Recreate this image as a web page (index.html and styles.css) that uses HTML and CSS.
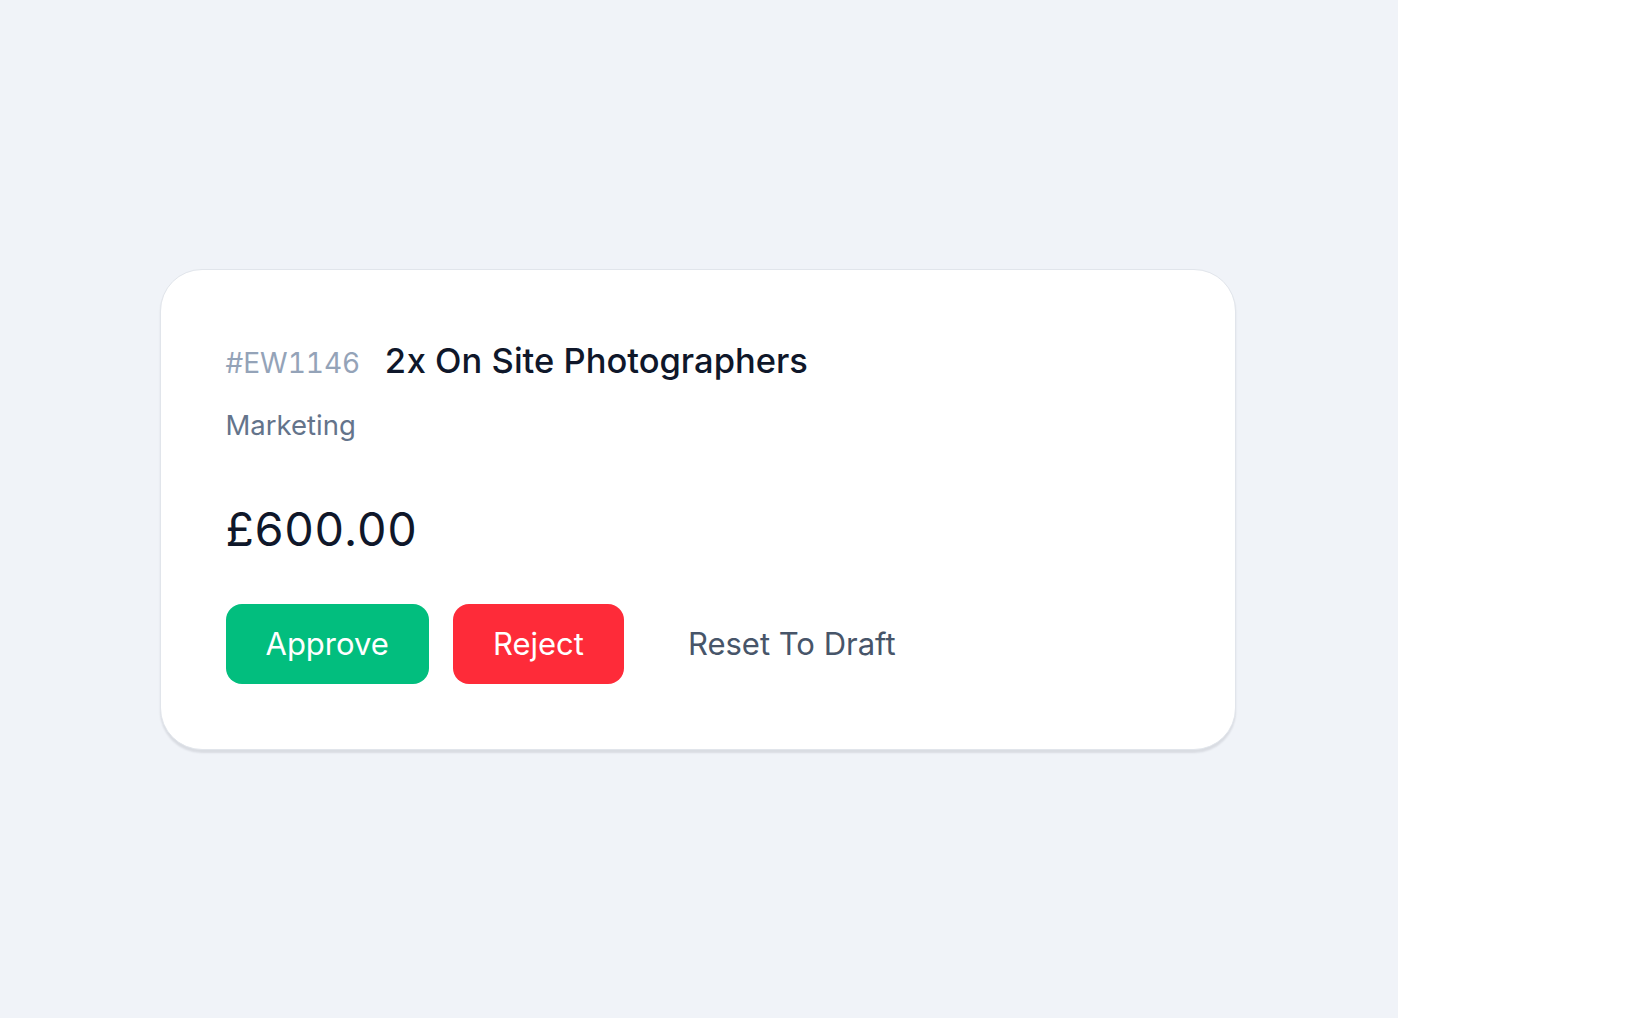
FILE: index.html
```html
<!DOCTYPE html>
<html lang="en">
<head>
<meta charset="utf-8">
<title>Expense approval</title>
<link rel="stylesheet" href="styles.css">
</head>
<body>
<div class="layout">
  <main class="stage">
    <section class="card">
      <div class="card-head">
        <span class="ref">#EW1146</span>
        <h1 class="title">2x On Site Photographers</h1>
      </div>
      <p class="category">Marketing</p>
      <p class="amount">£600.00</p>
      <div class="actions">
        <button class="btn btn-approve">Approve</button>
        <button class="btn btn-reject">Reject</button>
        <button class="btn btn-plain">Reset To Draft</button>
      </div>
    </section>
  </main>
  <aside class="side"></aside>
</div>
</body>
</html>
```

FILE: styles.css
```css
* { box-sizing: border-box; }
html, body { margin: 0; padding: 0; height: 100%; }
body {
  font-family: Inter, "Noto Sans", sans-serif;
  font-variant-numeric: tabular-nums;
  background: #ffffff;
}
.layout {
  display: flex;
  height: 100vh;
}
.stage {
  width: 1398px;
  flex: none;
  background: #f0f3f8;
  display: flex;
  align-items: center;
  justify-content: center;
}
.side {
  flex: 1;
  background: #ffffff;
}
.card {
  width: 1076px;
  margin-right: 3px;
  background: #ffffff;
  border: 1px solid #e1e5eb;
  border-radius: 42px;
  box-shadow: 0 3px 2px rgba(15, 23, 42, 0.10);
  padding: 67.5px 64px 65px 65px;
}
.card-head {
  display: flex;
  align-items: baseline;
  gap: 24px;
  height: 48px;
}
.ref {
  font-size: 28px;
  line-height: 40px;
  color: #94a3b8;
}
.title {
  margin: 0;
  font-size: 34.5px;
  line-height: 48px;
  font-weight: 500;
  color: #0f172a;
}
.category {
  margin: 19.5px 0 0;
  font-size: 27.5px;
  line-height: 40px;
  color: #64748b;
}
.amount {
  margin: 56px 0 0;
  font-size: 46.5px;
  line-height: 56px;
  color: #0f172a;
}
.actions {
  margin-top: 47px;
  display: flex;
  gap: 24px;
}
.btn {
  font-family: inherit;
  font-size: 31px;
  line-height: 40px;
  height: 80px;
  padding: 20px 40px;
  border: none;
  border-radius: 16px;
  background: transparent;
  cursor: pointer;
}
.btn-approve { background: #02be7e; color: #ffffff; }
.btn-reject { background: #fe2b39; color: #ffffff; }
.btn-plain { color: #475569; }
```
